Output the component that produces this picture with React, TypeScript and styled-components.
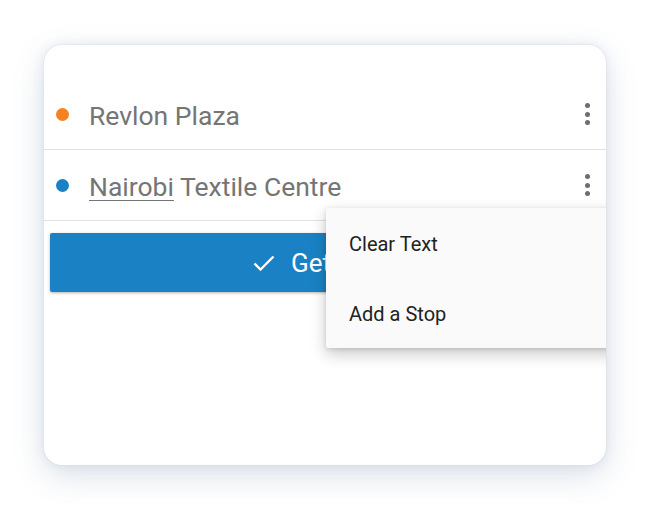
import React from "react";
import styled, { createGlobalStyle } from "styled-components";

const Global = createGlobalStyle`
  html, body { margin: 0; padding: 0; background: #ffffff; }
  body { font-family: Roboto, "Noto Sans", sans-serif; }
`;

const Page = styled.div`
  width: 651px;
  height: 511px;
  padding: 45px 0 0 44px;
  box-sizing: border-box;
`;

const Card = styled.div`
  position: relative;
  width: 562px;
  height: 420px;
  box-sizing: border-box;
  background: #ffffff;
  border-radius: 18px;
  overflow: hidden;
  padding-top: 34px;
  display: flex;
  flex-direction: column;
  box-shadow: 0 0 0 1px rgba(210, 220, 232, 0.35), 0 0 12px rgba(90, 120, 160, 0.12),
    0 10px 32px rgba(70, 100, 140, 0.2);
`;

const Row = styled.div`
  display: flex;
  align-items: center;
  height: 70px;
  border-bottom: 1px solid #e2e2e2;
  padding: 0 7px 0 12px;
`;

const Dot = styled.span<{ $color: string }>`
  width: 13px;
  height: 13px;
  border-radius: 50%;
  background: ${(p) => p.$color};
  flex: none;
`;

const Label = styled.span`
  flex: 1;
  margin-left: 20px;
  margin-top: 2px;
  font-size: 26.5px;
  color: #757575;
`;

const Underlined = styled.span`
  text-decoration: underline;
  text-decoration-thickness: 1px;
  text-underline-offset: 4px;
`;

const Kebab = styled.button`
  width: 24px;
  height: 32px;
  border: 0;
  padding: 0;
  background: transparent;
  display: flex;
  flex-direction: column;
  align-items: center;
  justify-content: center;
  gap: 3.5px;
  & > i {
    width: 5px;
    height: 5px;
    border-radius: 50%;
    background: #6e6e6e;
  }
`;

const Button = styled.button`
  margin: 12px 6px 0;
  height: 59px;
  border: 0;
  border-radius: 2px;
  background: #1a82c4;
  color: #ffffff;
  font-family: Roboto, sans-serif;
  font-size: 26px;
  display: flex;
  align-items: center;
  justify-content: center;
  gap: 16px;
  padding-left: 14px;
  box-shadow: 0 1px 3px rgba(0, 0, 0, 0.3);
`;

const Menu = styled.div`
  position: absolute;
  left: 282px;
  top: 163px;
  width: 300px;
  background: #fafafa;
  border-radius: 2px;
  box-shadow: 0 6px 16px rgba(0, 0, 0, 0.22), 0 1px 4px rgba(0, 0, 0, 0.12);
  display: flex;
  flex-direction: column;
`;

const MenuItem = styled.div`
  height: 70px;
  box-sizing: border-box;
  display: flex;
  align-items: center;
  padding: 1px 0 0 23px;
  font-size: 20px;
  color: #222222;
`;

const KebabIcon = () => (
  <Kebab aria-label="more">
    <i />
    <i />
    <i />
  </Kebab>
);

export default function App() {
  return (
    <>
      <Global />
      <Page>
        <Card>
          <Row>
            <Dot $color="#f58220" />
            <Label>Revlon Plaza</Label>
            <KebabIcon />
          </Row>
          <Row>
            <Dot $color="#1a82c4" />
            <Label>
              <Underlined>Nairobi</Underlined> Textile Centre
            </Label>
            <KebabIcon />
          </Row>
          <Button>
            <svg width="22" height="16" viewBox="0 0 22 16">
              <path d="M1.5 8.5 L7.5 14.5 L20.5 1.5" fill="none" stroke="#fff" strokeWidth="2.4" />
            </svg>
            Get Route
          </Button>
          <Menu>
            <MenuItem>Clear Text</MenuItem>
            <MenuItem>Add a Stop</MenuItem>
          </Menu>
        </Card>
      </Page>
    </>
  );
}
